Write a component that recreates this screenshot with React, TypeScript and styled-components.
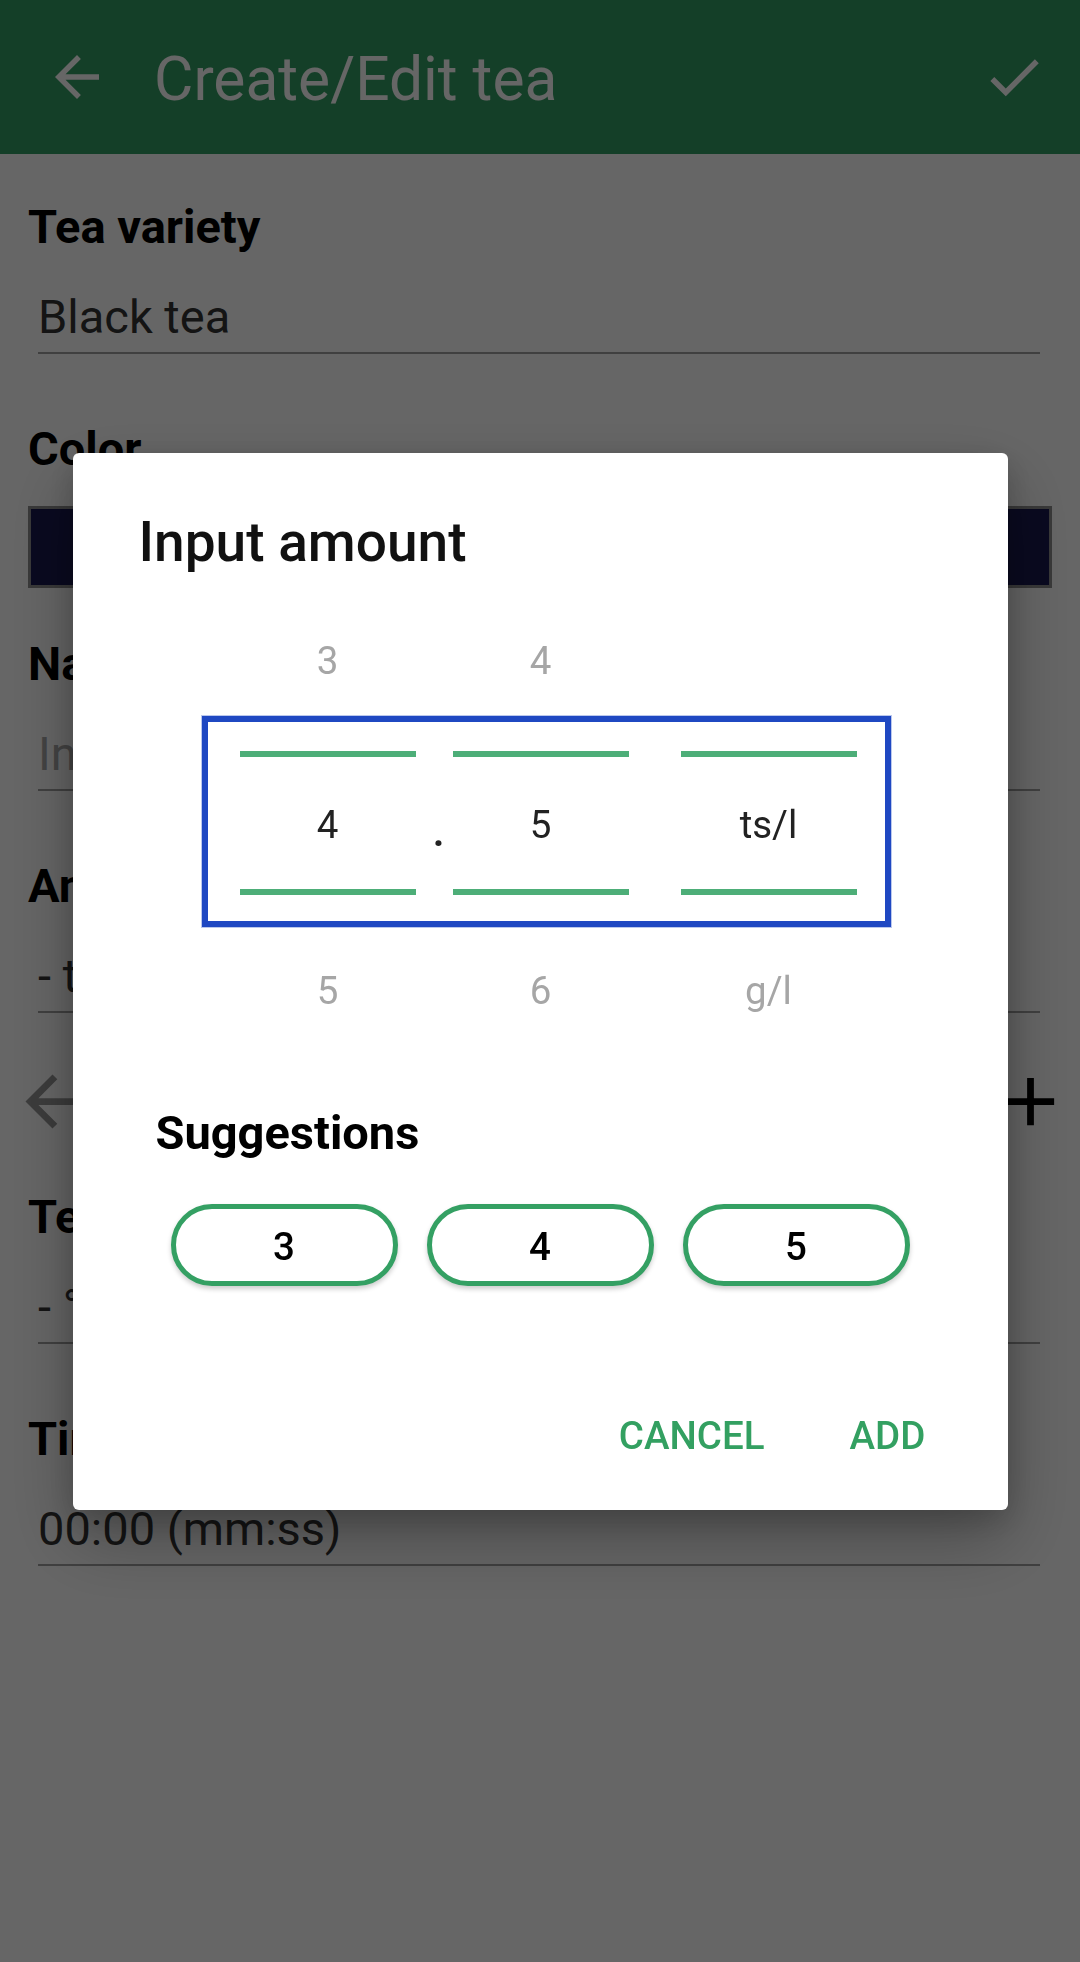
import React from "react";
import styled, { createGlobalStyle } from "styled-components";

const GlobalStyle = createGlobalStyle`
  html, body {
    margin: 0;
    padding: 0;
    background: #ffffff;
    font-family: Roboto, "Liberation Sans", Arial, sans-serif;
  }
  * { box-sizing: border-box; }
`;

const Screen = styled.div`
  position: relative;
  width: 1080px;
  min-height: 1962px;
  background: #ffffff;
`;

const AppBar = styled.header`
  height: 154px;
  background: #349d64;
  display: flex;
  align-items: center;
  padding: 0 33px 0 44px;
`;

const IconSlot = styled.div<{ $size: number }>`
  width: ${(p) => p.$size}px;
  height: ${(p) => p.$size}px;
  flex: 0 0 auto;
  display: flex;
  align-items: center;
  justify-content: center;
  svg {
    width: 100%;
    height: 100%;
    display: block;
  }
`;

const AppTitle = styled.h1`
  flex: 1;
  margin: 0 0 0 44px;
  padding-top: 5px;
  font-size: 60.5px;
  font-weight: 400;
  line-height: 72px;
  color: #ffffff;
`;

const Form = styled.main`
  display: flex;
  flex-direction: column;
  padding: 0 28px;
`;

const Label = styled.div<{ $gap?: number }>`
  margin-top: ${(p) => (p.$gap ?? 67)}px;
  font-size: 47px;
  font-weight: 700;
  line-height: 56px;
  color: #000000;
  white-space: nowrap;
`;

const Field = styled.div<{ $hint?: boolean }>`
  margin: 34px 12px 0 10px;
  padding-bottom: 7px;
  border-bottom: 2px solid #a0a0a0;
  font-size: 47px;
  line-height: 56px;
  color: ${(p) => (p.$hint ? "#a8a8a8" : "#333333")};
  white-space: nowrap;
`;

const ColorBar = styled.div<{ $fill: string }>`
  margin-top: 29px;
  height: 82px;
  border: 3px solid #8f8f8f;
  background: ${(p) => p.$fill};
`;

const NavRow = styled.div`
  margin: 48px -19px 0 -16px;
  display: flex;
  justify-content: space-between;
  align-items: center;
`;

const NavIcon = styled(IconSlot)<{ $muted?: boolean }>`
  color: ${(p) => (p.$muted ? "#969696" : "#000000")};
`;

const Scrim = styled.div`
  position: fixed;
  inset: 0;
  background: rgba(0, 0, 0, 0.6);
  display: flex;
  align-items: center;
  justify-content: center;
`;

const Dialog = styled.section`
  width: 935px;
  background: #ffffff;
  border-radius: 6px;
  padding: 57px 0 25px;
  box-shadow: 0 30px 70px rgba(0, 0, 0, 0.28), 0 10px 30px rgba(0, 0, 0, 0.18);
  display: flex;
  flex-direction: column;
`;

const DialogTitle = styled.h2`
  margin: 0;
  padding-left: 66px;
  font-size: 55px;
  font-weight: 500;
  line-height: 64px;
  color: #111111;
`;

const PickerArea = styled.div`
  position: relative;
  margin-top: 4px;
  height: 495px;
  display: flex;
  padding-left: 167px;
`;

const PickerColumn = styled.div<{ $gapBefore?: number }>`
  width: 176px;
  margin-left: ${(p) => p.$gapBefore ?? 0}px;
  display: flex;
  flex-direction: column;
`;

const PickerItem = styled.div`
  height: 165px;
  line-height: 165px;
  text-align: center;
  font-size: 38.5px;
  color: #a6a6a6;
`;

const SelectedSlot = styled.div`
  height: 165px;
  padding: 8.5px 0 12.5px;
`;

const SelectedValue = styled.div`
  height: 144px;
  border-top: 6px solid #4dae78;
  border-bottom: 6px solid #4dae78;
  padding-top: 4px;
  line-height: 128px;
  text-align: center;
  font-size: 38.5px;
  color: #222222;
`;

const DotSep = styled.div`
  width: 37px;
  padding: 14px 0 0 9px;
  display: flex;
  align-items: center;
  justify-content: center;
  font-size: 38.5px;
  font-weight: 700;
  color: #222222;
`;

const FocusRing = styled.div`
  position: absolute;
  left: 129px;
  top: 138.5px;
  width: 689px;
  height: 211px;
  border: 6px solid #1f48c2;
  outline: 1px solid rgba(31, 72, 194, 0.3);
  pointer-events: none;
`;

const SectionTitle = styled.h3`
  margin: 32px 0 0;
  padding-left: 83px;
  font-size: 47px;
  font-weight: 700;
  line-height: 56px;
  color: #000000;
`;

const ChipRow = styled.div`
  margin-top: 43px;
  display: flex;
  justify-content: center;
  gap: 29px;
`;

const Chip = styled.button`
  width: 227px;
  height: 82px;
  padding: 4px 0 0;
  border: 5.5px solid #34a063;
  border-radius: 41px;
  background: #ffffff;
  box-shadow: 0 3px 5px rgba(0, 0, 0, 0.2);
  font-family: inherit;
  font-size: 38.5px;
  font-weight: 500;
  color: #000000;
  display: flex;
  align-items: center;
  justify-content: center;
`;

const ButtonRow = styled.div`
  margin-top: 100px;
  display: flex;
  justify-content: flex-end;
  gap: 13px;
  padding-right: 32px;
`;

const TextButton = styled.button`
  height: 99px;
  min-width: 176px;
  padding: 0 22px;
  border: none;
  background: transparent;
  font-family: inherit;
  font-size: 38.5px;
  font-weight: 500;
  color: #33a061;
  display: flex;
  align-items: center;
  justify-content: center;
`;

const ArrowBack = () => (
  <svg viewBox="0 0 24 24" fill="currentColor">
    <path d="M20 11H7.83l5.59-5.59L12 4l-8 8 8 8 1.41-1.41L7.83 13H20v-2z" />
  </svg>
);

const Check = () => (
  <svg viewBox="0 0 24 24" fill="currentColor">
    <path d="M9 16.17L4.83 12l-1.42 1.41L9 19 21 7l-1.41-1.41z" />
  </svg>
);

const Plus = () => (
  <svg viewBox="0 0 24 24" fill="currentColor">
    <path d="M19 13h-6v6h-2v-6H5v-2h6V5h2v6h6v2z" />
  </svg>
);

const BarIcon = styled(IconSlot)`
  color: #ffffff;
`;

export default function App() {
  return (
    <Screen>
      <GlobalStyle />
      <AppBar>
        <BarIcon $size={66}>
          <ArrowBack />
        </BarIcon>
        <AppTitle>Create/Edit tea</AppTitle>
        <BarIcon $size={66}>
          <Check />
        </BarIcon>
      </AppBar>

      <Form>
        <Label $gap={45}>Tea variety</Label>
        <Field>Black tea</Field>

        <Label>Color</Label>
        <ColorBar $fill="#191950" />

        <Label $gap={48}>Name</Label>
        <Field $hint>Input name</Field>

        <Label>Amount</Label>
        <Field>- ts/l</Field>

        <NavRow>
          <NavIcon $size={81} $muted>
            <ArrowBack />
          </NavIcon>
          <NavIcon $size={81}>
            <Plus />
          </NavIcon>
        </NavRow>

        <Label $gap={47}>Temp.</Label>
        <Field>- °C</Field>

        <Label>Time</Label>
        <Field>00:00 (mm:ss)</Field>
      </Form>

      <Scrim>
        <Dialog>
          <DialogTitle>Input amount</DialogTitle>

          <PickerArea>
            <PickerColumn>
              <PickerItem>3</PickerItem>
              <SelectedSlot>
                <SelectedValue>4</SelectedValue>
              </SelectedSlot>
              <PickerItem>5</PickerItem>
            </PickerColumn>
            <DotSep>.</DotSep>
            <PickerColumn>
              <PickerItem>4</PickerItem>
              <SelectedSlot>
                <SelectedValue>5</SelectedValue>
              </SelectedSlot>
              <PickerItem>6</PickerItem>
            </PickerColumn>
            <PickerColumn $gapBefore={52}>
              <PickerItem />
              <SelectedSlot>
                <SelectedValue>ts/l</SelectedValue>
              </SelectedSlot>
              <PickerItem>g/l</PickerItem>
            </PickerColumn>
            <FocusRing />
          </PickerArea>

          <SectionTitle>Suggestions</SectionTitle>
          <ChipRow>
            <Chip>3</Chip>
            <Chip>4</Chip>
            <Chip>5</Chip>
          </ChipRow>

          <ButtonRow>
            <TextButton>CANCEL</TextButton>
            <TextButton>ADD</TextButton>
          </ButtonRow>
        </Dialog>
      </Scrim>
    </Screen>
  );
}
